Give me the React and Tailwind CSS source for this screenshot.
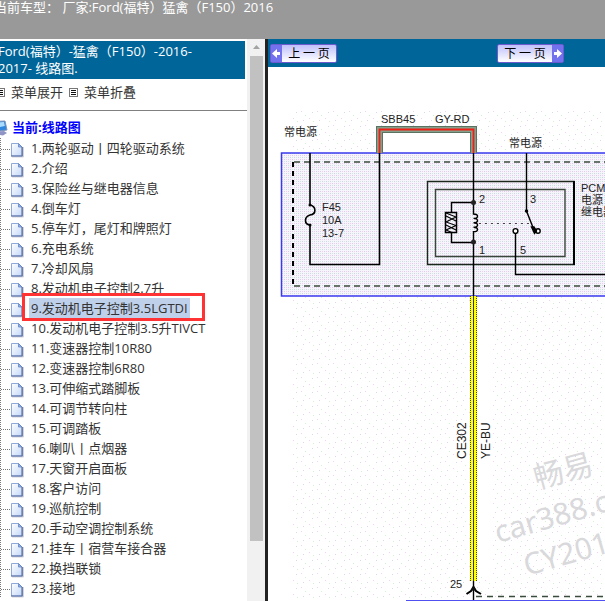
import React, { useState } from "react";

const menuItems = [
  "两轮驱动丨四轮驱动系统",
  "介绍",
  "保险丝与继电器信息",
  "倒车灯",
  "停车灯，尾灯和牌照灯",
  "充电系统",
  "冷却风扇",
  "发动机电子控制2.7升",
  "发动机电子控制3.5LGTDI",
  "发动机电子控制3.5升TIVCT",
  "变速器控制10R80",
  "变速器控制6R80",
  "可伸缩式踏脚板",
  "可调节转向柱",
  "可调踏板",
  "喇叭丨点烟器",
  "天窗开启面板",
  "客户访问",
  "巡航控制",
  "手动空调控制系统",
  "挂车丨宿营车接合器",
  "换挡联锁",
  "接地",
];

const MenuIcon = () => (
  <svg width="9" height="9" viewBox="0 0 9 9" shapeRendering="crispEdges">
    <rect x="0.5" y="0.5" width="8" height="8" fill="#fff" stroke="#777" />
    <path d="M2 2.5h5M2 4.5h5M2 6.5h5" stroke="#111" />
  </svg>
);

const ComputerIcon = () => (
  <svg width="16" height="16" viewBox="0 0 16 16">
    <path d="M1 1.5l12-.5 2 9-12 1.5z" fill="#2f86dc" stroke="#8292b8" />
    <path d="M2 2.5l10-.5.8 4L3 8z" fill="#a9dcff" />
    <path d="M5 11.5l7-.5 3 2-4 2.5-7-1z" fill="#8f94c4" />
  </svg>
);

const PageIcon = () => (
  <svg width="29" height="20" viewBox="0 0 29 20" className="shrink-0">
    <path d="M0.5 0v20" stroke="#777" strokeDasharray="1 1" />
    <path d="M1 11.5h10" stroke="#777" strokeDasharray="1 1" />
    <path d="M12 19h11.5V9" fill="none" stroke="#d4d4dc" />
    <path d="M11.5 5.5h7l3.5 3.5v9H11.5z" fill="url(#page)" stroke="#8fa9da" />
    <path d="M11 18h11.2V9" fill="none" stroke="#566b9e" strokeWidth="1.2" />
    <path d="M18.5 5.5V9H22z" fill="#8fb2ee" stroke="#6684c0" strokeWidth="0.8" />
  </svg>
);

const ArrowIcon = ({ right }) => (
  <svg width="11" height="17" viewBox="0 0 11 17" className="shrink-0 bg-[#7272ee]">
    <path
      d={right ? "M2 7h3V4l5 4.5L5 13v-3H2z" : "M9 7H6V4L1 8.5 6 13v-3h3z"}
      fill="#fff"
    />
  </svg>
);

const Diagram = () => (
  <svg
    className="block h-full w-full"
    fontFamily='"Liberation Sans", "Noto Sans CJK SC", sans-serif'
    fontSize="11"
    fill="#222"
  >
    <defs>
      <pattern id="sparse" width="16" height="14" patternUnits="userSpaceOnUse">
        <path d="M1 2h1v1h-1zM9 9h1v1h-1z" fill="#f4d2f6" />
        <path d="M5 6h1v1h-1zM13 12h1v1h-1z" fill="#d2f2d6" />
        <path d="M12 3h1v1h-1zM3 11h1v1h-1z" fill="#d8d8ea" />
      </pattern>
      <pattern id="dense" width="4" height="4" patternUnits="userSpaceOnUse">
        <rect width="4" height="4" fill="#f6f5fb" />
        <path d="M0 0h1v1h-1zM2 2h1v1h-1z" fill="#d2d2e8" />
        <path d="M2 0h1v1h-1z" fill="#f6cdf2" />
        <path d="M0 2h1v1h-1z" fill="#cfeadb" />
      </pattern>
    </defs>

    <rect x="22" y="43" width="100%" height="100%" fill="url(#sparse)" />
    <rect x="115" y="66" width="87" height="20" fill="#fff" />
    <rect x="210" y="230" width="13" height="280" fill="#fff" />

    {/* watermark */}
    <g
      fill="#d9d9dc"
      fontSize="30"
      fontFamily='"Noto Sans", "Noto Sans CJK SC", sans-serif'
    >
      <text transform="translate(269 422) rotate(-15)">畅易</text>
      <text transform="translate(230 476) rotate(-16)">car388.com</text>
      <text transform="translate(259 509) rotate(-16)">CY2016</text>
    </g>

    {/* fuse box */}
    <rect x="13.5" y="86" width="2000" height="143" fill="url(#dense)" stroke="#3a3af0" strokeWidth="1.5" />
    <path d="M25 95V219" stroke="#000" strokeWidth="2" strokeDasharray="5 4" />
    <path d="M26 95H2000M26 219H2000" stroke="#3c4c3c" strokeWidth="1.3" strokeDasharray="6 4" />

    {/* SBB45 feed */}
    <g fill="none">
      <path d="M111.5 86V62.5H205.5V86" stroke="#5a7361" strokeWidth="7" />
      <path d="M111.5 86V62.5H205.5V86" stroke="#86a08c" strokeWidth="5" />
      <path d="M111.5 86V62.5H205.5V86" stroke="#f01e14" strokeWidth="1.8" />
    </g>

    <g fill="none" stroke="#000" strokeWidth="1.4">
      <path d="M42 86V138C48 139 49 147 42 148C36 150 36 157 42 158V197.5H111.5V86" strokeWidth="1.6" />
      <path d="M159.5 114.5H306V197.5H159.5z" stroke="#1c281c" />
      <path d="M306 114V198" strokeWidth="2" />
      <path d="M167.5 122.5H297V189.5H167.5z" stroke="#3a463a" />
      <path d="M205.5 86V147q4 0 4 2.2t-4 2.2q4 0 4 2.2t-4 2.2q4 0 4 2.2t-4 2.2q4 0 4 2.2t-4 2.2V229" />
      <path d="M205.5 135.5H183.5V145.5M183.5 165.5V175.5H205.5" />
      <path d="M177.5 145.5H188.5V165.5H177.5z" strokeWidth="1.5" />
      <path d="M178 146L188 150L178 155L188 158.5L178 163L184 165.5M178 149L188 154M178 158L188 163" strokeWidth="1.1" />
      <path d="M211 156.5H262" strokeWidth="1" strokeDasharray="2 4" stroke="#444" />
      <path d="M258.5 86V144L266 163" />
      <circle cx="270" cy="164" r="2.2" fill="#fff" />
      <path d="M263.5 160L266.5 166.5L268.5 164L266 160z" fill="#000" />
      <circle cx="247.5" cy="164" r="2.4" fill="#fff" />
      <path d="M247.5 166.5V207.5H2000" />
    </g>
    <circle cx="42" cy="138" r="1.5" fill="#000" />
    <circle cx="42" cy="158" r="1.5" fill="#000" />
    <circle cx="205.5" cy="135.5" r="2.5" fill="#222" />
    <circle cx="205.5" cy="175" r="2.5" fill="#222" />
    <circle cx="258.5" cy="144" r="1.7" fill="#000" />

    {/* CE302 wire */}
    <rect x="202" y="229" width="7" height="285" fill="#ffff00" />
    <path d="M202.5 229V514M208.5 229V514" stroke="#4c4c10" strokeDasharray="1 1" />
    <path d="M205.5 229V514" stroke="#2c2c8c" />
    <path d="M205.5 514V700" stroke="#000" strokeWidth="1.4" />
    <path d="M198.5 527L203 524L205.5 520L208 524L213 527" fill="none" stroke="#000" strokeWidth="2" />
    <path d="M205.5 519L202.5 523.5H208.5z" fill="#111" />
    <path d="M208 529.5H2000" stroke="#3c4c3c" strokeWidth="1.3" strokeDasharray="6 5" />
    <path d="M138 533.5H2000" stroke="#5050f0" />

    <text x="16" y="69">常电源</text>
    <text x="113" y="56">SBB45</text>
    <text x="167" y="56">GY-RD</text>
    <text x="241" y="80">常电源</text>
    <text x="54" y="144">F45</text>
    <text x="54" y="157">10A</text>
    <text x="54" y="170">13-7</text>
    <text x="211" y="136">2</text>
    <text x="262" y="136">3</text>
    <text x="211" y="187">1</text>
    <text x="252" y="187">5</text>
    <text x="313" y="125">PCM</text>
    <text x="313" y="137">电源</text>
    <text x="313" y="149">继电器</text>
    <text x="182" y="521">25</text>
    <g fontFamily='"Liberation Sans Narrow", "Liberation Sans", sans-serif' fontSize="12">
      <text transform="translate(198 392) rotate(-90)">CE302</text>
      <text transform="translate(222 392) rotate(-90)">YE-BU</text>
    </g>
  </svg>
);

const App = () => {
  const [selected, setSelected] = useState(8);

  return (
    <div className="flex h-screen flex-col overflow-hidden bg-white font-['Open_Sans','Noto_Sans_CJK_SC',sans-serif] text-[13px] text-[#333]">
      <svg width="0" height="0" className="absolute">
        <linearGradient id="page" x1="0" y1="0" x2="1" y2="1">
          <stop offset="0" stopColor="#fff" />
          <stop offset="1" stopColor="#c3d8f8" />
        </linearGradient>
      </svg>

      <header className="h-[39px] shrink-0 bg-[#999] text-white">
        <p className="-ml-1.5 whitespace-pre leading-[15px]">
          当前车型： 厂家:Ford(福特）猛禽（F150）2016
        </p>
      </header>

      <div className="flex min-h-0 flex-1">
        <aside className="flex w-[268px] shrink-0 border-r-3 border-[#222]">
          <div className="min-w-0 flex-1 overflow-hidden pt-0.5">
            <h1 className="mr-0.5 -ml-0.5 bg-[#006699] py-0.5 leading-[17px] whitespace-nowrap text-white">
              Ford(福特）-猛禽（F150）-2016-
              <br />
              2017- 线路图.
            </h1>
            <div className="-ml-1 flex h-8 items-start gap-1.5 border-b border-[#808080] pt-1 leading-[18px]">
              <button className="flex items-center gap-1.5">
                <MenuIcon />
                菜单展开
              </button>
              <button className="flex items-center gap-1.5">
                <MenuIcon />
                菜单折叠
              </button>
            </div>

            <div className="mt-[7px] -ml-2 flex h-5 items-center gap-1 font-bold text-[#0000ff]">
              <ComputerIcon />
              <a href="#top">当前:线路图</a>
            </div>
            <ul>
              {menuItems.map((item, idx) => (
                <li key={item} className="relative flex h-5 items-center">
                  <PageIcon />
                  <a
                    href={`#item-${idx + 1}`}
                    onClick={() => setSelected(idx)}
                    className={`px-0.5 leading-5 whitespace-nowrap ${
                      selected === idx ? "bg-[#bfd0ea]" : ""
                    }`}
                  >
                    {idx + 1}.{item}
                  </a>
                  {selected === idx && (
                    <span className="pointer-events-none absolute -top-[5px] left-[22px] z-10 h-7 w-[183px] border-3 border-[#ff3333]" />
                  )}
                </li>
              ))}
            </ul>
          </div>

          <div className="flex w-[18px] flex-col items-center bg-[#f1f1f1] pt-1.5 pb-[60px]">
            <svg width="7" height="4" viewBox="0 0 7 4" className="mb-[7px] shrink-0">
              <path d="M3.5 0L7 4H0z" fill="#a3a3a3" />
            </svg>
            <div className="w-[13px] flex-1 bg-[#c1c1c1]" />
          </div>
        </aside>

        <main className="flex min-w-0 flex-1 flex-col">
          <nav className="flex h-7 shrink-0 items-center gap-[160px] bg-[#006699] pl-0.5 text-black">
            <button className="flex h-[19px] w-[67px] shrink-0 items-center rounded-xs border border-[#6a5acd] bg-linear-to-b from-[#c0c0fa] to-white">
              <ArrowIcon />
              <span className="flex-1 font-['Noto_Sans_CJK_SC',sans-serif] text-xs leading-4">
                上 一 页
              </span>
            </button>
            <button className="flex h-[19px] w-[67px] shrink-0 items-center rounded-xs border border-[#6a5acd] bg-linear-to-b from-[#c0c0fa] to-white">
              <span className="flex-1 font-['Noto_Sans_CJK_SC',sans-serif] text-xs leading-4">
                下 一 页
              </span>
              <ArrowIcon right />
            </button>
          </nav>
          <div className="min-h-0 flex-1">
            <Diagram />
          </div>
        </main>
      </div>
    </div>
  );
};

export default App;
